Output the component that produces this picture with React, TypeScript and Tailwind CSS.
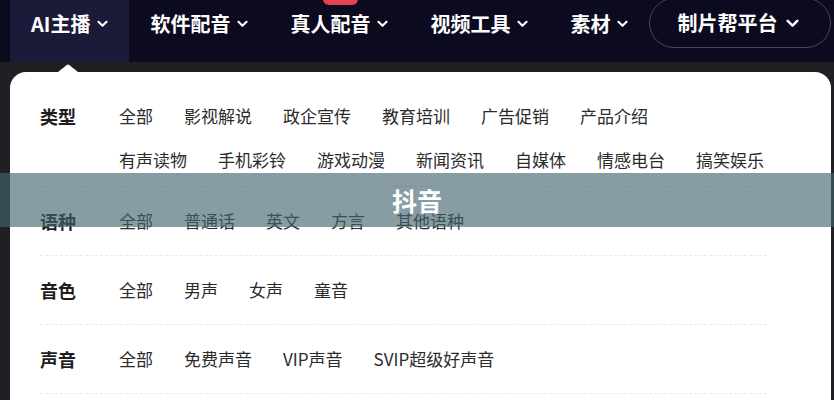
import React from 'react';

// ─── Data ─────────────────────────────────────────────────────────────────────

const NAV_ITEMS = [
  { label: 'AI主播', active: true },
  { label: '软件配音' },
  { label: '真人配音', badge: true },
  { label: '视频工具' },
  { label: '素材' },
];

interface FilterRow {
  label: string;
  lines: string[][];
}

const FILTERS: FilterRow[] = [
  {
    label: '类型',
    lines: [
      ['全部', '影视解说', '政企宣传', '教育培训', '广告促销', '产品介绍'],
      ['有声读物', '手机彩铃', '游戏动漫', '新闻资讯', '自媒体', '情感电台', '搞笑娱乐'],
    ],
  },
  { label: '语种', lines: [['全部', '普通话', '英文', '方言', '其他语种']] },
  { label: '音色', lines: [['全部', '男声', '女声', '童音']] },
  { label: '声音', lines: [['全部', '免费声音', 'VIP声音', 'SVIP超级好声音']] },
];

const FONT = { fontFamily: '"Noto Sans CJK SC", "Noto Sans", sans-serif' };

// ─── Icons ────────────────────────────────────────────────────────────────────

function Chevron({ className = '' }: { className?: string }) {
  return (
    <svg viewBox="0 0 12 8" className={className} fill="none">
      <path
        d="M1.6 1.6 6 6 10.4 1.6"
        stroke="currentColor"
        strokeWidth="2.3"
        strokeLinecap="round"
        strokeLinejoin="round"
      />
    </svg>
  );
}

// ─── App ──────────────────────────────────────────────────────────────────────

export default function App() {
  return (
    <div
      className="relative w-[834px] h-[400px] overflow-hidden bg-[#202024]"
      style={FONT}
    >
      {/* Top nav */}
      <div className="flex h-[62px] bg-[#0b0a1f] pl-[10px] text-white">
        {NAV_ITEMS.map((item) => (
          <div
            key={item.label}
            className={`relative flex h-full items-start px-[21px] pt-[10px] ${
              item.active ? 'bg-[#1b1a39]' : ''
            }`}
          >
            {item.badge && (
              <span className="absolute left-[54px] top-[-14px] h-[19px] w-[35px] rounded-[6px] bg-[#e5444f]" />
            )}
            <span className="flex items-center gap-[7px] text-[20px] font-semibold leading-[28px]">
              {item.label}
              <Chevron className="h-[8px] w-[11px]" />
            </span>
            {item.active && (
              <svg
                viewBox="0 0 20 8"
                className="absolute bottom-[-10px] left-[48px] h-[8px] w-[20px]"
              >
                <path d="M0 8 L8.5 1.2 Q10 0 11.5 1.2 L20 8 Z" fill="#fff" />
              </svg>
            )}
          </div>
        ))}
        <div className="mt-[-2px] flex h-[50px] items-center gap-[9px] rounded-full border border-[#45445f] pl-[27px] pr-[31px] text-[20px] font-semibold leading-[28px]">
          制片帮平台
          <Chevron className="h-[9px] w-[13px]" />
        </div>
      </div>

      {/* Dropdown panel */}
      <div className="pl-[10px] pr-[3px] pt-[10px]">
        <div className="h-[400px] rounded-[16px] bg-white pl-[30px]">
          <div className="w-[727px]">
            {FILTERS.map((row, i) => (
              <div
                key={row.label}
                className={`flex border-b border-dashed border-[#e9e9e9] ${
                  i === 0 ? 'pb-[12px] pt-[30px]' : 'py-[20px]'
                }`}
              >
                <div className="w-[79px] shrink-0 text-[18px] font-bold leading-[28px] text-[#1e1e1e]">
                  {row.label}
                </div>
                <div className="flex flex-col gap-[16px]">
                  {row.lines.map((line, j) => (
                    <div key={j} className="flex gap-[31px] text-[17px] leading-[28px] text-[#2b2b2b]">
                      {line.map((opt) => (
                        <span key={opt} className="whitespace-nowrap">
                          {opt}
                        </span>
                      ))}
                    </div>
                  ))}
                </div>
              </div>
            ))}
          </div>
        </div>
      </div>

      {/* Toast overlay */}
      <div className="absolute left-0 right-0 top-[173px] flex h-[54px] items-center justify-center bg-[rgba(68,101,111,0.64)]">
        <span className="text-[25px] font-bold leading-none text-white">抖音</span>
      </div>
    </div>
  );
}
